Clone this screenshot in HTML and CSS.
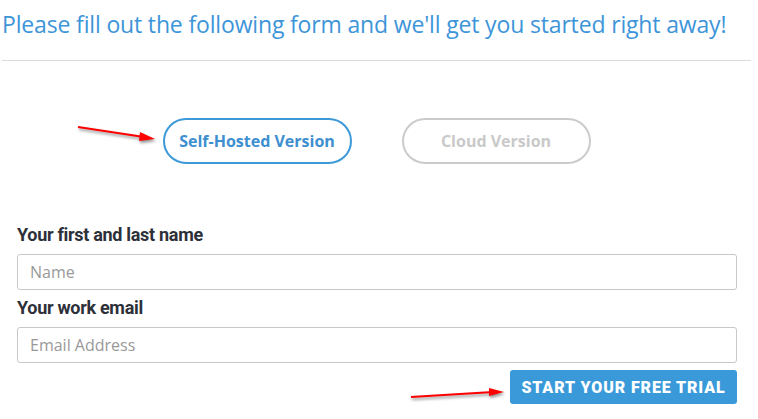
FILE: index.html
```html
<!DOCTYPE html>
<html lang="en">
<head>
  <meta charset="UTF-8" />
  <title>Start your free trial</title>
  <link rel="stylesheet" href="styles.css">
</head>
<body>

<div class="page">
  <h1 class="intro">Please fill out the following form and we'll get you started right away!</h1>
  <hr class="divider">

  <div class="versions">
    <button class="version active">Self-Hosted Version</button>
    <button class="version">Cloud Version</button>
  </div>

  <form class="signup">
    <label class="field-label" for="name">Your first and last name</label>
    <input class="field" id="name" type="text" placeholder="Name">
    <label class="field-label" for="email">Your work email</label>
    <input class="field" id="email" type="email" placeholder="Email Address">
    <div class="actions">
      <button class="trial" type="button">Start your free trial</button>
    </div>
  </form>

  <!-- red annotation arrows -->
  <svg class="arrow arrow-top" width="90" height="24" viewBox="0 0 90 24">
    <line x1="2" y1="3" x2="68" y2="13" stroke="#f00" stroke-width="2"/>
    <polygon points="64,8 79,15 63,17" fill="#f00"/>
  </svg>
  <svg class="arrow arrow-bottom" width="104" height="16" viewBox="0 0 104 16">
    <line x1="2" y1="10" x2="84" y2="5" stroke="#f00" stroke-width="2"/>
    <polygon points="80,1 95,5 80,9" fill="#f00"/>
  </svg>
</div>

</body>
</html>
```

FILE: styles.css
```css
* { box-sizing: border-box; }
body {
  margin: 0;
  background: #fff;
  font-family: 'Open Sans', sans-serif;
}

.page {
  position: relative;
  width: 758px;
  height: 419px;
  padding: 0 21px 0 2px;
}

.intro {
  margin: 0;
  padding-top: 8px;
  font-size: 23px;
  font-weight: 400;
  line-height: 32px;
  color: #3d95d9;
  letter-spacing: -0.16px;
}

.divider {
  margin: 20px -14px 0 0;
  border: 0;
  border-top: 1px solid #dcdcdc;
}

.versions {
  display: flex;
  justify-content: center;
  gap: 50px;
  margin: 57px -14px 0 0;
}

.version {
  width: 189px;
  height: 46px;
  border: 2px solid #cbcbcb;
  border-radius: 23px;
  background: #fff;
  font-family: 'Open Sans', sans-serif;
  font-weight: 700;
  font-size: 16px;
  color: #c9c9c9;
  cursor: pointer;
}

.version.active {
  border-color: #3d99d8;
  color: #3d8fd0;
}

.signup {
  display: flex;
  flex-direction: column;
  margin: 60px 0 0 15px;
}

.field-label {
  font-family: Roboto, sans-serif;
  font-weight: 700;
  font-size: 18px;
  line-height: 21px;
  color: #2d3039;
  letter-spacing: -0.3px;
  margin-bottom: 9px;
}

.field {
  height: 36px;
  border: 1px solid #c8c8c8;
  border-radius: 3px;
  padding: 0 12px;
  font-family: 'Open Sans', sans-serif;
  font-size: 16px;
  color: #333;
  margin-bottom: 7px;
}

.field::placeholder {
  color: #999;
}

.actions {
  display: flex;
  justify-content: flex-end;
}

.trial {
  width: 227px;
  height: 34px;
  border: 0;
  border-radius: 3px;
  background: #3a9ad9;
  color: #fff;
  font-family: Roboto, sans-serif;
  font-weight: 900;
  font-size: 16px;
  letter-spacing: 0.9px;
  text-transform: uppercase;
  cursor: pointer;
}

.arrow {
  position: absolute;
  filter: drop-shadow(1px 2px 1.5px rgba(0, 0, 0, 0.45));
}

.arrow-top {
  left: 76px;
  top: 124px;
}

.arrow-bottom {
  left: 409px;
  top: 387px;
}
```
